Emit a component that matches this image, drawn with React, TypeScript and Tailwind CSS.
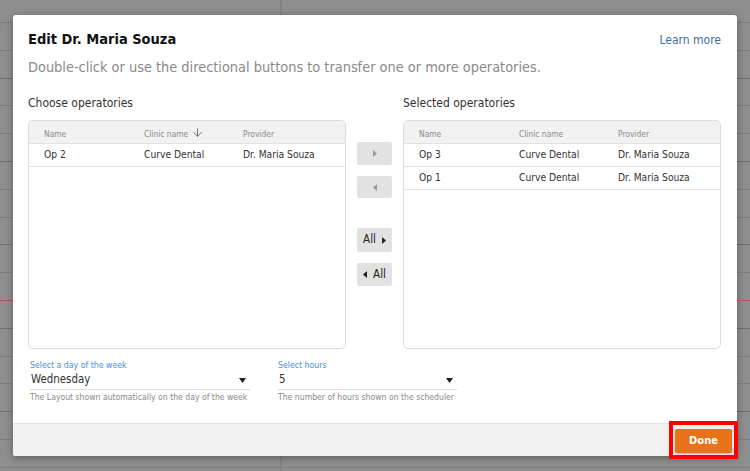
import { ArrowDown } from 'lucide-react';

const left = [{ name: 'Op 2', clinic: 'Curve Dental', provider: 'Dr. Maria Souza' }];
const right = [
  { name: 'Op 3', clinic: 'Curve Dental', provider: 'Dr. Maria Souza' },
  { name: 'Op 1', clinic: 'Curve Dental', provider: 'Dr. Maria Souza' },
];

type Row = { name: string; clinic: string; provider: string };

function Tri({ dir, dark }: { dir: 'l' | 'r'; dark?: boolean }) {
  return (
    <svg width="4" height="7" viewBox="0 0 4 7" className={dark ? 'fill-[#222]' : 'fill-[#9a9a9a]'}>
      {dir === 'r' ? <path d="M0 0 L4 3.5 L0 7 Z" /> : <path d="M4 0 L0 3.5 L4 7 Z" />}
    </svg>
  );
}

function Table({ rows, sorted }: { rows: Row[]; sorted?: boolean }) {
  return (
    <div className="w-[318px] h-[229px] border border-[#dcdcdc] rounded-[5px] overflow-hidden bg-white">
      <div className="flex items-center h-[23px] pt-[4px] bg-[#f2f2f2] border-b border-[#e2e2e2] pl-[15px] text-[8.4px] text-[#8a8a8a]">
        <div className="w-[100px]">Name</div>
        <div className="w-[99px] flex items-center gap-[3px]">
          Clinic name
          {sorted && <ArrowDown size={13} strokeWidth={1.5} className="text-[#555] -mt-[3px]" />}
        </div>
        <div>Provider</div>
      </div>
      {rows.map((r) => (
        <div key={r.name} className="flex items-center h-[23px] border-b border-[#e2e2e2] pl-[15px] text-[10.2px] text-[#333]">
          <div className="w-[100px]">{r.name}</div>
          <div className="w-[99px]">{r.clinic}</div>
          <div>{r.provider}</div>
        </div>
      ))}
    </div>
  );
}

function Select({ label, value, help, width }: { label: string; value: string; help: string; width: string }) {
  return (
    <div className={`${width} flex flex-col`}>
      <div className="text-[8.7px] leading-[12px] text-[#4a8fe0]">{label}</div>
      <div className="flex items-center justify-between h-[19px] border-b border-[#dedede] pl-[1px] pr-[4px]">
        <span className="text-[11.4px] text-[#333]">{value}</span>
        <svg width="7" height="5" viewBox="0 0 7 5" className="fill-[#222]">
          <path d="M0 0 H7 L3.5 5 Z" />
        </svg>
      </div>
      <div className="whitespace-nowrap text-[8.6px] leading-[14px] text-[#8a8a8a]">{help}</div>
    </div>
  );
}

export default function App() {
  const lines = Array.from({ length: 16 });
  return (
    <div className="relative w-[750px] h-[471px] overflow-hidden bg-[#8f8f8f]" style={{ fontFamily: '"DejaVu Sans Condensed", "DejaVu Sans", Verdana, sans-serif' }}>
      {/* scheduler behind the overlay */}
      <div className="flex flex-col">
        <div className="h-[23px] border-b border-[#7c7c7c]" />
        {lines.map((_, i) => (
          <div
            key={i}
            className={`h-[27.8px] border-b ${i === 9 ? 'border-[#b15a55]' : i % 3 === 1 ? 'border-[#6f6f6f]' : 'border-[#7e7e7e]'}`}
          />
        ))}
      </div>
      <div className="absolute top-0 left-[280px] w-[2px] h-full bg-[#848484]" />

      {/* modal */}
      <div className="absolute left-[13px] top-[15px] w-[724px] h-[441px] bg-white rounded-[3px] shadow-[0_2px_8px_rgba(0,0,0,0.35)] flex flex-col">
        <div className="flex-1 px-[15px] pt-[14px]">
          <div className="flex items-center justify-between">
            <h1 className="text-[14.5px] leading-[20px] font-bold text-[#111]">Edit Dr. Maria Souza</h1>
            <a className="text-[12px] text-[#3d6fa3] pr-[1px] mt-[2px]">Learn more</a>
          </div>
          <p className="mt-[8px] text-[14.4px] leading-[20px] text-[#8a8a8a]">
            Double-click or use the directional buttons to transfer one or more operatories.
          </p>

          <div className="flex mt-[19px]">
            <div className="flex flex-col">
              <div className="text-[12px] leading-[15px] text-[#333] mb-[9px]">Choose operatories</div>
              <Table rows={left} sorted />
            </div>
            <div className="w-[57px] flex flex-col items-center pt-[46px]">
              <button className="w-[35px] h-[23px] rounded-[2px] bg-[#e2e2e2] flex items-center justify-center">
                <Tri dir="r" />
              </button>
              <button className="mt-[11px] w-[35px] h-[22px] rounded-[2px] bg-[#e2e2e2] flex items-center justify-center">
                <Tri dir="l" />
              </button>
              <button className="mt-[30px] w-[35px] h-[24px] rounded-[2px] bg-[#e2e2e2] flex items-center justify-center gap-[6px] text-[11.5px] text-[#222]">
                All <Tri dir="r" dark />
              </button>
              <button className="mt-[11px] w-[35px] h-[23px] rounded-[2px] bg-[#e2e2e2] flex items-center justify-center gap-[6px] text-[11.5px] text-[#222]">
                <Tri dir="l" dark /> All
              </button>
            </div>
            <div className="flex flex-col">
              <div className="text-[12px] leading-[15px] text-[#333] mb-[9px]">Selected operatories</div>
              <Table rows={right} />
            </div>
          </div>

          <div className="flex gap-[28px] mt-[10px] pl-[2px]">
            <Select width="w-[220px]" label="Select a day of the week" value="Wednesday" help="The Layout shown automatically on the day of the week" />
            <Select width="w-[179px]" label="Select hours" value="5" help="The number of hours shown on the scheduler" />
          </div>
        </div>

        <div className="h-[33px] bg-[#f1f1f1] border-t border-[#e4e4e4] rounded-b-[3px] flex items-center justify-end mr-[-1px]">
          <div className="border-[4px] border-[#ff0000] p-[2px]">
            <button className="w-[57px] h-[24px] rounded-[2px] bg-[#e8731a] text-white text-[11px] font-semibold shadow-[0_1px_2px_rgba(0,0,0,0.25)]">
              Done
            </button>
          </div>
        </div>
      </div>
    </div>
  );
}
